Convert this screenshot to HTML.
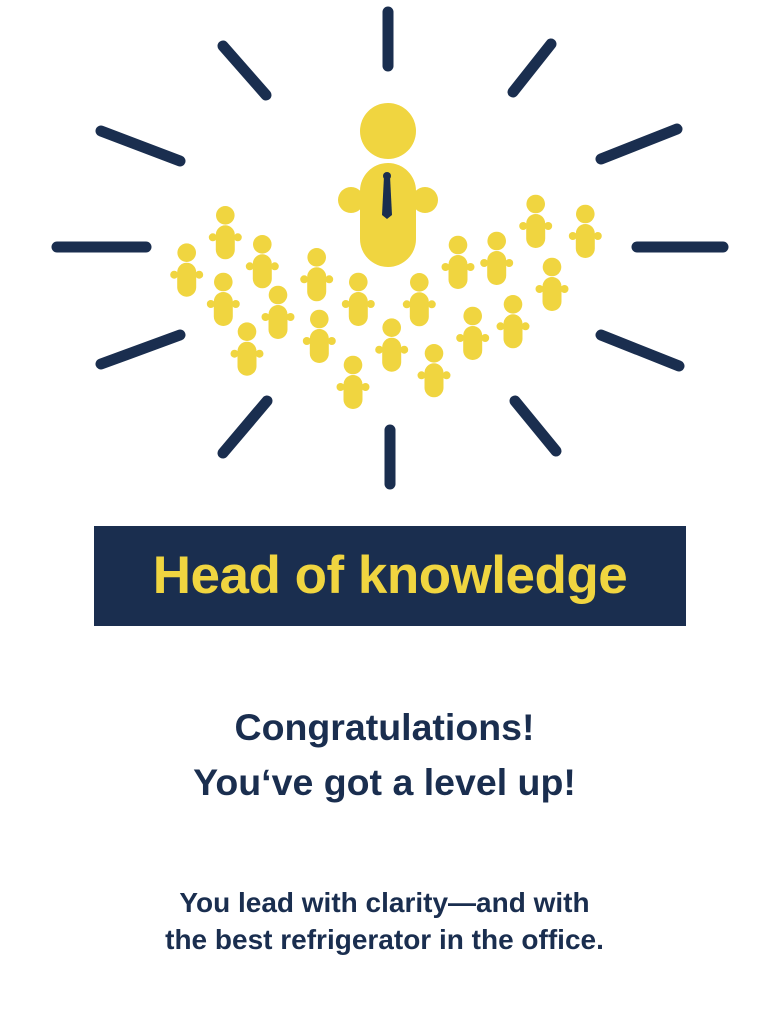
<!DOCTYPE html>
<html><head><meta charset="utf-8"><style>
html,body{margin:0;padding:0;background:#fff;}
body{width:769px;height:1025px;position:relative;overflow:hidden;font-family:"Liberation Sans",sans-serif;}
.banner{position:absolute;left:94px;top:526px;width:592px;height:100px;background:#1a2e4f;color:#f0d540;font-weight:bold;font-size:53px;text-align:center;line-height:100px;letter-spacing:-0.5px;}
.t{position:absolute;left:0;width:769px;text-align:center;color:#1a2e4f;font-weight:bold;}
</style></head><body>
<svg width="769" height="500" style="position:absolute;left:0;top:0">
<g stroke="#1a2e4f" stroke-width="11" stroke-linecap="round" fill="none">
<line x1="388" y1="12" x2="388" y2="66"/>
<line x1="390" y1="430" x2="390" y2="484"/>
<line x1="57" y1="247" x2="146" y2="247"/>
<line x1="637" y1="247" x2="723" y2="247"/>
<line x1="223" y1="46" x2="266" y2="95"/>
<line x1="551" y1="44" x2="513" y2="92"/>
<line x1="101" y1="131" x2="180" y2="161"/>
<line x1="677" y1="129" x2="601" y2="159"/>
<line x1="101" y1="364" x2="180" y2="335"/>
<line x1="679" y1="366" x2="601" y2="335"/>
<line x1="223" y1="453" x2="267" y2="401"/>
<line x1="556" y1="451" x2="515" y2="401"/>
</g>
<g fill="#f0d540">
<circle cx="388" cy="131" r="28"/>
<rect x="360" y="163" width="56" height="104" rx="28"/>
<circle cx="351" cy="200" r="13"/>
<circle cx="425" cy="200" r="13"/>
</g>
<path d="M384 176 L390 176 L392 215 L387 219 L382 215 Z" fill="#1a2e4f"/>
<circle cx="387" cy="176" r="4" fill="#1a2e4f"/>
<defs><g id="p" fill="#f0d540">
<circle cx="0" cy="0" r="9.3"/>
<rect x="-9.5" y="10" width="19" height="34" rx="9.5"/>
<circle cx="-12.5" cy="22" r="4"/>
<circle cx="12.5" cy="22" r="4"/>
</g></defs>
<use href="#p" x="186.7" y="252.7"/>
<use href="#p" x="225.3" y="215.3"/>
<use href="#p" x="262.3" y="244.3"/>
<use href="#p" x="223.3" y="282"/>
<use href="#p" x="278" y="295"/>
<use href="#p" x="247" y="331.7"/>
<use href="#p" x="316.7" y="257.3"/>
<use href="#p" x="319.3" y="319"/>
<use href="#p" x="358.3" y="282"/>
<use href="#p" x="353" y="365"/>
<use href="#p" x="391.7" y="327.7"/>
<use href="#p" x="419.3" y="282.3"/>
<use href="#p" x="434" y="353.3"/>
<use href="#p" x="458" y="245"/>
<use href="#p" x="472.7" y="316"/>
<use href="#p" x="496.7" y="241"/>
<use href="#p" x="513" y="304.3"/>
<use href="#p" x="535.7" y="204"/>
<use href="#p" x="552" y="267"/>
<use href="#p" x="585.3" y="214"/>
</svg>
<div class="banner">Head of knowledge</div>
<div class="t" style="top:700px;font-size:37.5px;line-height:55px">Congratulations!<br>You‘ve got a level up!</div>
<div class="t" style="top:884px;font-size:28px;line-height:37px">You lead with clarity—and with<br>the best refrigerator in the office.</div>
</body></html>
